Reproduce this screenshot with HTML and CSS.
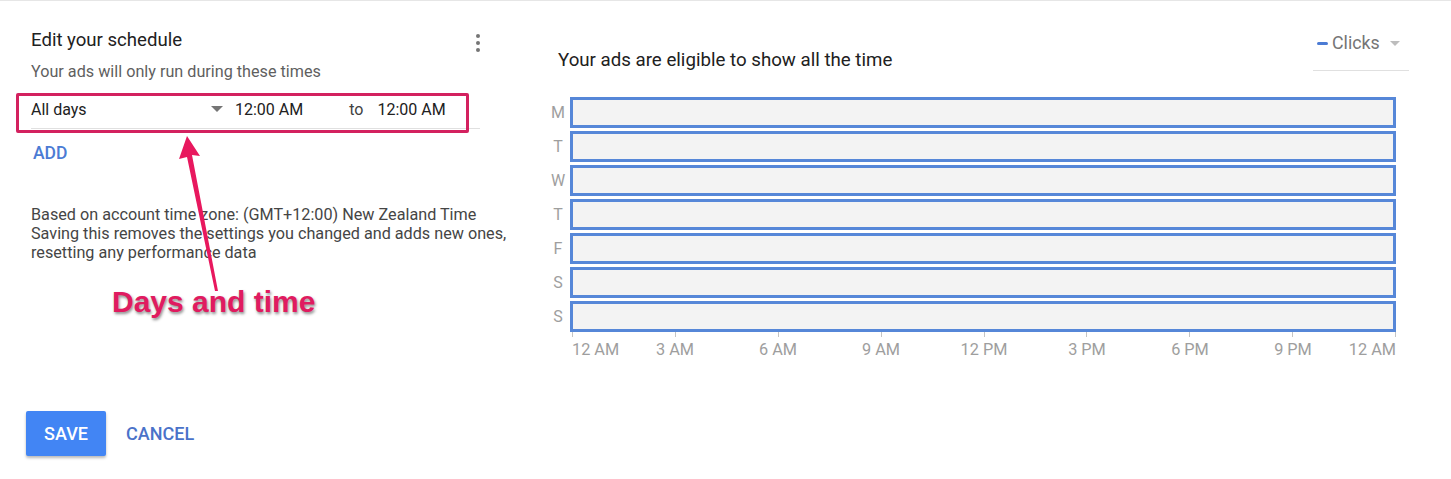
FILE: index.html
```html
<!DOCTYPE html>
<html lang="en">
<head>
<meta charset="utf-8">
<title>Edit your schedule</title>
<link rel="stylesheet" href="styles.css">
</head>
<body>
<div class="page">
  <section class="left">
    <div class="head">
      <h2 class="title">Edit your schedule</h2>
      <div class="kebab"><span></span><span></span><span></span></div>
    </div>
    <p class="subtitle">Your ads will only run during these times</p>
    <div class="row">
      <div class="select">
        <span>All days</span>
        <span class="caret"></span>
      </div>
      <span class="time">12:00 AM</span>
      <span class="to">to</span>
      <span class="time">12:00 AM</span>
    </div>
    <div class="add">ADD</div>
    <div class="info">
      <div>Based on account time zone: (GMT+12:00) New Zealand Time</div>
      <div>Saving this removes the settings you changed and adds new ones,<br>resetting any performance data</div>
    </div>
    <div class="actions">
      <button class="save">SAVE</button>
      <button class="cancel">CANCEL</button>
    </div>
  </section>

  <section class="right">
    <div class="rhead">
      <h2 class="rtitle">Your ads are eligible to show all the time</h2>
      <div class="metric">
        <span class="dash"></span><span class="mlabel">Clicks</span><span class="mcaret"></span>
      </div>
    </div>
    <div class="chart">
      <div class="day">M</div><div class="bar"></div>
      <div class="day">T</div><div class="bar"></div>
      <div class="day">W</div><div class="bar"></div>
      <div class="day">T</div><div class="bar"></div>
      <div class="day">F</div><div class="bar"></div>
      <div class="day">S</div><div class="bar"></div>
      <div class="day">S</div><div class="bar"></div>
    </div>
    <div class="axis">
      <div class="ticks">
        <i></i><i></i><i></i><i></i><i></i><i></i><i></i><i></i><i></i>
      </div>
      <div class="labels">
        <span class="first">12 AM</span>
        <span>3 AM</span>
        <span>6 AM</span>
        <span>9 AM</span>
        <span>12 PM</span>
        <span>3 PM</span>
        <span>6 PM</span>
        <span>9 PM</span>
        <span class="last">12 AM</span>
      </div>
    </div>
  </section>
</div>

<div class="callout-box"></div>
<svg class="callout-arrow" width="1451" height="479" viewBox="0 0 1451 479" aria-hidden="true">
  <polygon points="187,135 200,155 192,154 218,290 215,290 187,156 179,158" fill="#e8185e"/>
</svg>
<div class="callout-text">Days and time</div>
</body>
</html>
```

FILE: styles.css
```css
* { box-sizing: border-box; }

html, body {
  margin: 0;
  padding: 0;
  background: #ffffff;
}

body {
  font-family: Roboto, "Noto Sans", Arial, sans-serif;
  color: #212121;
  width: 1451px;
  height: 479px;
  overflow: hidden;
  position: relative;
  border-top: 1px solid #e6e6e6;
}

.page {
  display: flex;
  align-items: flex-start;
}

/* ---------- left panel ---------- */
.left {
  width: 540px;
  padding: 29px 0 0 31px;
}

.head {
  width: 455px;
  display: flex;
  justify-content: space-between;
  align-items: flex-start;
}

.title {
  margin: 0;
  font-size: 18.6px;
  line-height: 20px;
  font-weight: 400;
  color: #212121;
}

.kebab {
  width: 16px;
  padding-top: 4px;
  display: flex;
  flex-direction: column;
  align-items: center;
  gap: 3px;
}
.kebab span {
  width: 4px;
  height: 4px;
  border-radius: 50%;
  background: #757575;
}

.subtitle {
  margin: 10px 0 0;
  font-size: 16.2px;
  line-height: 19px;
  color: #5f5f5f;
}

.row {
  margin-top: 9px;
  width: 449px;
  height: 39px;
  border-bottom: 1px solid #e0e0e0;
  display: flex;
  align-items: center;
  font-size: 16px;
  color: #212121;
}

.select {
  width: 192px;
  display: flex;
  justify-content: space-between;
  align-items: center;
}
.caret {
  width: 0;
  height: 0;
  border-left: 6px solid transparent;
  border-right: 6px solid transparent;
  border-top: 6px solid #757575;
}
.time { margin-left: 12px; }
.to { margin-left: 46px; color: #424242; }
.row .to + .time { margin-left: 14px; }

.add {
  margin-top: 14px;
  padding-left: 2px;
  font-size: 17.5px;
  line-height: 20px;
  font-weight: 500;
  color: #4b7bd4;
}

.info {
  margin-top: 42px;
  font-size: 16.2px;
  line-height: 19px;
  color: #454545;
}

.actions {
  margin-top: 149px;
  margin-left: -5px;
  display: flex;
  align-items: center;
  gap: 20px;
}

button {
  font-family: Roboto, "Noto Sans", Arial, sans-serif;
  font-size: 18px;
  font-weight: 500;
  border: 0;
  cursor: pointer;
}
.save {
  width: 80px;
  height: 45px;
  background: #4285f4;
  color: #ffffff;
  border-radius: 2px;
  box-shadow: 0 2px 3px rgba(0, 0, 0, 0.28);
}
.cancel {
  background: transparent;
  color: #4a72c9;
  padding: 0;
}

/* ---------- right panel ---------- */
.right {
  padding: 29px 0 0 8px;
  width: 882px;
}

.rhead {
  display: flex;
  justify-content: space-between;
  align-items: flex-start;
  padding-left: 10px;
}

.rtitle {
  margin: 20px 0 0;
  font-size: 18.7px;
  line-height: 20px;
  font-weight: 400;
  color: #212121;
}

.metric {
  width: 96px;
  margin-right: 13px;
  height: 41px;
  border-bottom: 1px solid #e0e0e0;
  display: flex;
  align-items: flex-start;
  padding: 0 0 0 4px;
  font-size: 17.8px;
  line-height: 26px;
  color: #757575;
}
.dash {
  width: 11px;
  height: 3px;
  border-radius: 2px;
  background: #4b7bd4;
  margin: 12px 4px 0 0;
}
.mcaret {
  width: 0;
  height: 0;
  border-left: 5px solid transparent;
  border-right: 5px solid transparent;
  border-top: 5px solid #bdbdbd;
  margin: 11px 0 0 10px;
}

.chart {
  margin-top: 26px;
  display: grid;
  grid-template-columns: 20px 826px;
  column-gap: 2px;
  row-gap: 3px;
}

.day {
  display: flex;
  align-items: center;
  justify-content: center;
  font-size: 16px;
  color: #9e9e9e;
}

.bar {
  height: 31px;
  border: 3px solid #5687d8;
  background: #f3f3f3;
}

.axis {
  margin-left: 24px;
  width: 824px;
}
.ticks {
  display: flex;
  justify-content: space-between;
  height: 5px;
}
.ticks i {
  width: 1px;
  background: #c4c4c4;
}
.labels {
  margin-top: 3px;
  display: flex;
  justify-content: space-between;
  font-size: 16.3px;
  line-height: 20px;
  color: #9e9e9e;
}
.labels span {
  width: 0;
  display: flex;
  justify-content: center;
  white-space: nowrap;
}
.labels .first { justify-content: flex-start; }
.labels .last { justify-content: flex-end; }

/* ---------- annotation overlay ---------- */
.callout-box {
  position: absolute;
  left: 16px;
  top: 92px;
  width: 453px;
  height: 40px;
  border: 3px solid #d3215f;
  border-radius: 2px;
}

.callout-arrow {
  position: absolute;
  left: 0;
  top: 0;
  pointer-events: none;
}

.callout-text {
  position: absolute;
  left: 112px;
  top: 284px;
  font-family: "Liberation Sans", Arial, sans-serif;
  font-weight: 700;
  font-size: 30px;
  line-height: 34px;
  color: #e01b60;
  -webkit-text-stroke: 3px #ffffff;
  paint-order: stroke fill;
  text-shadow: 1px 2px 3px rgba(0, 0, 0, 0.45);
}
```
